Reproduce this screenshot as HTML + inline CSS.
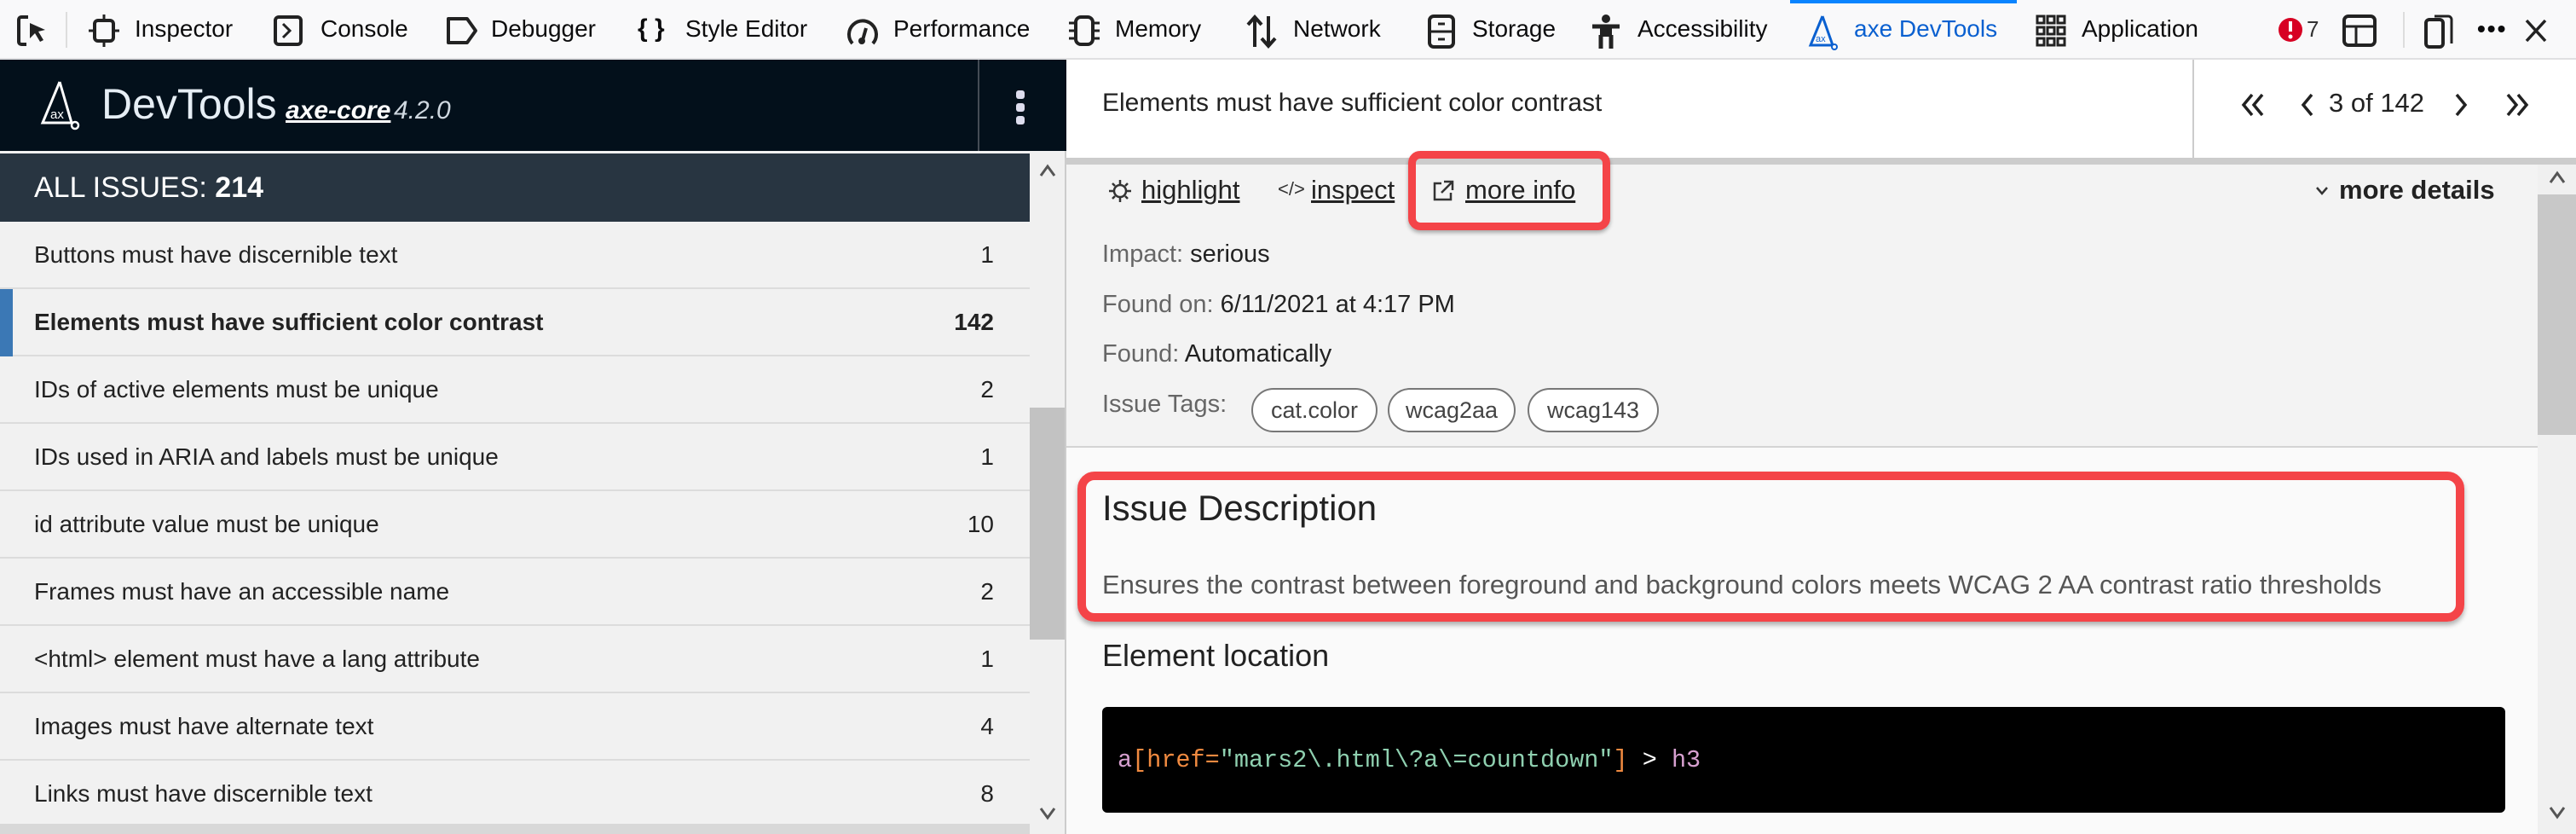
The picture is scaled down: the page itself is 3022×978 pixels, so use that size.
<!DOCTYPE html>
<html><head><meta charset="utf-8"><style>
*{box-sizing:border-box;margin:0;padding:0}
body{width:3022px;height:978px;overflow:hidden;font-family:"Liberation Sans",sans-serif;background:#fafafa;position:relative;color:#222}
.a{position:absolute;white-space:nowrap}
#tb{position:absolute;left:0;top:0;width:3022px;height:70px;background:#f9f9fa;border-bottom:2px solid #e0e0e2}
#tb .t{position:absolute;top:17px;font-size:28px;color:#0c0c0d;line-height:34px}
#tb svg{position:absolute;top:17px}
#left{position:absolute;left:0;top:70px;width:1251px;height:908px;background:#f1f1f1;border-right:2px solid #ccc}
.row{position:absolute;left:0;width:1208px;height:79px;border-bottom:2px solid #dcdcdc;font-size:28px;line-height:77px;color:#222}
.row span.l{position:absolute;left:40px}
.row span.r{position:absolute;right:42px}
.d{position:absolute;left:1293px;font-size:29px;color:#666}
.d b{font-weight:normal;color:#222}
.pill{position:absolute;top:455px;height:52px;border:2px solid #777;border-radius:26px;font-size:27px;line-height:48px;text-align:center;color:#444;background:#fff}
</style></head><body>
<div id="tb">
<svg style="left:19px" width="40" height="38" viewBox="0 0 40 38"><path d="M14 3H6a3 3 0 0 0-3 3v26a3 3 0 0 0 3 3h6M3 3" fill="none" stroke="#222" stroke-width="4"/><path d="M16 10l18 8-8 2 6 10-4 2-6-10-6 6z" fill="#222"/></svg>
<div class="a" style="left:77px;top:14px;width:2px;height:42px;background:#ddd"></div>
<svg style="left:104px" width="36" height="38" viewBox="0 0 36 38"><rect x="7" y="7" width="22" height="24" rx="4" fill="none" stroke="#222" stroke-width="4"/><path d="M18 0v7M18 31v7M0 19h7M29 19h7" stroke="#222" stroke-width="3"/></svg>
<div class="t" style="left:158px">Inspector</div>
<svg style="left:320px" width="36" height="38" viewBox="0 0 36 38"><rect x="3" y="3" width="30" height="32" rx="4" fill="none" stroke="#222" stroke-width="4"/><path d="M12 11l8 8-8 8" fill="none" stroke="#222" stroke-width="3"/></svg>
<div class="t" style="left:376px">Console</div>
<svg style="left:522px" width="40" height="38" viewBox="0 0 40 38"><path d="M4 5h22l10 14-10 14H4z" fill="none" stroke="#222" stroke-width="4" stroke-linejoin="round"/></svg>
<div class="t" style="left:576px">Debugger</div>
<div class="t" style="left:748px;font-weight:bold;font-size:30px">{ }</div>
<div class="t" style="left:804px">Style Editor</div>
<svg style="left:992px" width="40" height="38" viewBox="0 0 40 38"><path d="M8 34A16 16 0 1 1 32 34" fill="none" stroke="#222" stroke-width="4"/><path d="M20 30l4-14" stroke="#222" stroke-width="4"/><circle cx="19" cy="31" r="4" fill="#222"/></svg>
<div class="t" style="left:1048px">Performance</div>
<svg style="left:1252px" width="40" height="38" viewBox="0 0 40 38"><rect x="10" y="3" width="20" height="32" rx="6" fill="none" stroke="#222" stroke-width="4"/><path d="M2 10h8M2 19h8M2 28h8M30 10h8M30 19h8M30 28h8" stroke="#222" stroke-width="3"/></svg>
<div class="t" style="left:1308px">Memory</div>
<svg style="left:1460px" width="40" height="40" viewBox="0 0 40 40"><path d="M12 38V4M4 12l8-9 8 9M28 2v34M20 28l8 9 8-9" fill="none" stroke="#222" stroke-width="4"/></svg>
<div class="t" style="left:1517px">Network</div>
<svg style="left:1675px" width="32" height="40" viewBox="0 0 32 40"><rect x="2" y="2" width="28" height="36" rx="5" fill="none" stroke="#222" stroke-width="4"/><path d="M2 20h28M12 11h8M12 29h8" stroke="#222" stroke-width="3"/></svg>
<div class="t" style="left:1727px">Storage</div>
<svg style="left:1866px" width="36" height="40" viewBox="0 0 36 40"><circle cx="18" cy="5" r="5" fill="#222"/><path d="M2 14h32M18 14v10M12 24v16M24 24v16" stroke="#222" stroke-width="5"/><rect x="11" y="14" width="14" height="12" fill="#222"/></svg>
<div class="t" style="left:1921px">Accessibility</div>
<div class="a" style="left:2100px;top:0;width:266px;height:4px;background:#0a84ff"></div>
<svg style="left:2120px" width="40" height="42" viewBox="0 0 40 42"><path d="M18 2L4 36h26" fill="none" stroke="#0a60d0" stroke-width="3"/><path d="M18 2l12 34" stroke="#0a60d0" stroke-width="3"/><circle cx="32" cy="38" r="3" fill="none" stroke="#0a60d0" stroke-width="2"/><text x="10" y="32" font-size="11" fill="#0a60d0" font-family="Liberation Sans">ax</text></svg>
<div class="t" style="left:2175px;color:#0a60d0">axe DevTools</div>
<svg style="left:2388px" width="36" height="38" viewBox="0 0 36 38"><g fill="none" stroke="#222" stroke-width="3"><rect x="2" y="2" width="8" height="8"/><rect x="14" y="2" width="8" height="8"/><rect x="26" y="2" width="8" height="8"/><rect x="2" y="15" width="8" height="8"/><rect x="14" y="15" width="8" height="8"/><rect x="26" y="15" width="8" height="8"/><rect x="2" y="28" width="8" height="8"/><rect x="14" y="28" width="8" height="8"/><rect x="26" y="28" width="8" height="8"/></g></svg>
<div class="t" style="left:2442px">Application</div>
<svg style="left:2672px;top:19px" width="30" height="32" viewBox="0 0 30 32"><circle cx="15" cy="16" r="14" fill="#d70022"/><path d="M15 6v12" stroke="#fff" stroke-width="4"/><circle cx="15" cy="24" r="2.5" fill="#fff"/></svg>
<div class="t" style="left:2706px;font-size:26px;color:#333">7</div>
<svg style="left:2748px" width="40" height="38" viewBox="0 0 40 38"><rect x="2" y="2" width="36" height="34" rx="5" fill="none" stroke="#222" stroke-width="4"/><path d="M2 14h36M16 14v22" stroke="#222" stroke-width="3"/></svg>
<div class="a" style="left:2819px;top:14px;width:2px;height:42px;background:#ddd"></div>
<svg style="left:2842px" width="36" height="40" viewBox="0 0 36 40"><rect x="4" y="6" width="20" height="32" rx="4" fill="none" stroke="#222" stroke-width="4"/><path d="M14 2h16a4 4 0 0 1 4 4v28" fill="none" stroke="#222" stroke-width="3"/></svg>
<div class="t" style="left:2906px;font-weight:bold;letter-spacing:2px">•••</div>
<svg style="left:2962px;top:22px" width="26" height="28" viewBox="0 0 26 28"><path d="M2 2l22 24M24 2L2 26" stroke="#222" stroke-width="3.5"/></svg>
</div>

<div id="left">
<div class="a" style="left:0;top:0;width:1251px;height:107px;background:#03101b"></div>
<svg class="a" style="left:44px;top:24px" width="52" height="60" viewBox="0 0 52 60"><path d="M26 2L6 50h34" fill="none" stroke="#fff" stroke-width="3"/><path d="M26 2l14 48" stroke="#fff" stroke-width="3"/><circle cx="44" cy="53" r="4" fill="none" stroke="#fff" stroke-width="2.5"/><text x="15" y="45" font-size="15" fill="#fff" font-family="Liberation Sans">ax</text></svg>
<div class="a" style="left:119px;top:20px;font-size:50px;color:#e6eef5;line-height:64px">DevTools</div>
<div class="a" style="left:335px;top:40px;font-size:30px;line-height:40px;color:#fff;font-style:italic;font-weight:bold;text-decoration:underline">axe-core</div>
<div class="a" style="left:462px;top:40px;font-size:30px;line-height:40px;color:#cfd8e0;font-style:italic">4.2.0</div>
<div class="a" style="left:1147px;top:0;width:2px;height:107px;background:#444c55"></div>
<div class="a" style="left:1192px;top:36px;width:10px;height:10px;border-radius:3px;background:#dde;box-shadow:0 15px 0 #dde,0 30px 0 #dde"></div>
<div class="a" style="left:0;top:110px;width:1208px;height:80px;background:#283541"></div>
<div class="a" style="left:40px;top:128px;font-size:34px;color:#fff;line-height:44px">ALL ISSUES: <b>214</b></div>
<div class="row" style="top:190px"><span class="l">Buttons must have discernible text</span><span class="r">1</span></div>
<div class="row" style="top:269px;font-weight:bold"><div class="a" style="left:0;top:0;width:15px;height:79px;background:#3b78b5"></div><span class="l">Elements must have sufficient color contrast</span><span class="r">142</span></div>
<div class="row" style="top:348px"><span class="l">IDs of active elements must be unique</span><span class="r">2</span></div>
<div class="row" style="top:427px"><span class="l">IDs used in ARIA and labels must be unique</span><span class="r">1</span></div>
<div class="row" style="top:506px"><span class="l">id attribute value must be unique</span><span class="r">10</span></div>
<div class="row" style="top:585px"><span class="l">Frames must have an accessible name</span><span class="r">2</span></div>
<div class="row" style="top:664px"><span class="l">&lt;html&gt; element must have a lang attribute</span><span class="r">1</span></div>
<div class="row" style="top:743px"><span class="l">Images must have alternate text</span><span class="r">4</span></div>
<div class="row" style="top:822px"><span class="l">Links must have discernible text</span><span class="r">8</span></div>
<div class="a" style="left:1208px;top:110px;width:41px;height:798px;background:#f0f0f0"></div>
<div class="a" style="left:1208px;top:408px;width:41px;height:272px;background:#c2c2c2"></div>
<svg class="a" style="left:1219px;top:122px" width="20" height="16" viewBox="0 0 20 16"><path d="M2 14L10 3l8 11" fill="none" stroke="#555" stroke-width="3"/></svg>
<svg class="a" style="left:1219px;top:876px" width="20" height="16" viewBox="0 0 20 16"><path d="M2 2l8 11 8-11" fill="none" stroke="#555" stroke-width="3"/></svg>
<div class="a" style="left:0;top:896px;width:1208px;height:12px;background:#d8d8d8"></div>
</div>

<div class="a" style="left:1251px;top:70px;width:1771px;height:115px;background:#fff"></div>
<div class="a" style="left:1293px;top:104px;font-size:30px;color:#222">Elements must have sufficient color contrast</div>
<div class="a" style="left:2572px;top:70px;width:2px;height:115px;background:#ccc"></div>
<svg class="a" style="left:2628px;top:108px" width="30" height="30" viewBox="0 0 30 30"><path d="M14 3L4 15l10 12M26 3L16 15l10 12" fill="none" stroke="#222" stroke-width="3.5"/></svg>
<svg class="a" style="left:2698px;top:108px" width="18" height="30" viewBox="0 0 18 30"><path d="M14 3L4 15l10 12" fill="none" stroke="#222" stroke-width="3.5"/></svg>
<div class="a" style="left:2732px;top:103px;font-size:31px;color:#222">3 of 142</div>
<svg class="a" style="left:2878px;top:108px" width="18" height="30" viewBox="0 0 18 30"><path d="M4 3l10 12L4 27" fill="none" stroke="#222" stroke-width="3.5"/></svg>
<svg class="a" style="left:2938px;top:108px" width="30" height="30" viewBox="0 0 30 30"><path d="M4 3l10 12L4 27M16 3l10 12-10 12" fill="none" stroke="#222" stroke-width="3.5"/></svg>
<div class="a" style="left:1251px;top:185px;width:1771px;height:8px;background:#ccc"></div>
<div class="a" style="left:1251px;top:193px;width:1726px;height:332px;background:#f3f3f3;border-bottom:2px solid #d4d4d4"></div>
<div class="a" style="left:2977px;top:193px;width:45px;height:785px;background:#f0f0f0"></div>
<div class="a" style="left:2977px;top:228px;width:45px;height:282px;background:#c8c8c8"></div>
<svg class="a" style="left:2990px;top:200px" width="20" height="16" viewBox="0 0 20 16"><path d="M2 14L10 3l8 11" fill="none" stroke="#555" stroke-width="3"/></svg>
<svg class="a" style="left:2990px;top:945px" width="20" height="16" viewBox="0 0 20 16"><path d="M2 2l8 11 8-11" fill="none" stroke="#555" stroke-width="3"/></svg>

<svg class="a" style="left:1300px;top:210px" width="28" height="28" viewBox="0 0 28 28"><circle cx="14" cy="14" r="7" fill="none" stroke="#333" stroke-width="2.5"/><path d="M14 1v5M14 22v5M1 14h5M22 14h5M5 5l3 3M20 20l3 3M5 23l3-3M20 8l3-3" stroke="#333" stroke-width="2.5"/></svg>
<div class="a" style="left:1339px;top:205px;font-size:31px;color:#222;text-decoration:underline">highlight</div>
<div class="a" style="left:1499px;top:209px;font-size:22px;color:#333">&lt;/&gt;</div>
<div class="a" style="left:1538px;top:205px;font-size:31px;color:#222;text-decoration:underline">inspect</div>
<svg class="a" style="left:1680px;top:211px" width="26" height="26" viewBox="0 0 26 26"><path d="M11 4H3v19h19v-8" fill="none" stroke="#333" stroke-width="2.5"/><path d="M14 2h10v10M24 2L11 15" fill="none" stroke="#333" stroke-width="2.5"/></svg>
<div class="a" style="left:1719px;top:205px;font-size:31px;color:#222;text-decoration:underline">more info</div>
<div class="a" style="left:1652px;top:177px;width:237px;height:93px;border:9px solid #f44448;border-radius:14px;box-shadow:0 3px 5px rgba(0,0,0,.3)"></div>
<svg class="a" style="left:2716px;top:218px" width="16" height="12" viewBox="0 0 16 12"><path d="M2 2l6 7 6-7" fill="none" stroke="#333" stroke-width="2.5"/></svg>
<div class="a" style="left:2744px;top:205px;font-size:31px;color:#222;font-weight:bold">more details</div>

<div class="d" style="top:282px">Impact: <b>serious</b></div>
<div class="d" style="top:341px">Found on: <b>6/11/2021 at 4:17 PM</b></div>
<div class="d" style="top:399px">Found: <b>Automatically</b></div>
<div class="d" style="top:458px">Issue Tags:</div>
<div class="pill" style="left:1468px;width:148px">cat.color</div>
<div class="pill" style="left:1628px;width:150px">wcag2aa</div>
<div class="pill" style="left:1792px;width:154px">wcag143</div>

<div class="a" style="left:1264px;top:553px;width:1627px;height:176px;border:10px solid #f44448;border-radius:20px;box-shadow:0 4px 6px rgba(0,0,0,.3)"></div>
<div class="a" style="left:1293px;top:572px;font-size:42px;color:#222">Issue Description</div>
<div class="a" style="left:1293px;top:668px;font-size:31px;color:#555">Ensures the contrast between foreground and background colors meets WCAG 2 AA contrast ratio thresholds</div>
<div class="a" style="left:1293px;top:748px;font-size:36px;color:#222">Element location</div>
<div class="a" style="left:1293px;top:829px;width:1646px;height:124px;background:#000;border-radius:6px"></div>
<div class="a" style="left:1311px;top:875px;font-family:'Liberation Mono',monospace;font-size:28.5px;color:#fff"><span style="color:#d7a0d0">a</span><span style="color:#f08a40">[</span><span style="color:#f08a40">href=</span><span style="color:#8fd0b0">"mars2\.html\?a\=countdown"</span><span style="color:#f08a40">]</span> &gt; <span style="color:#d7a0d0">h3</span></div>
</body></html>
